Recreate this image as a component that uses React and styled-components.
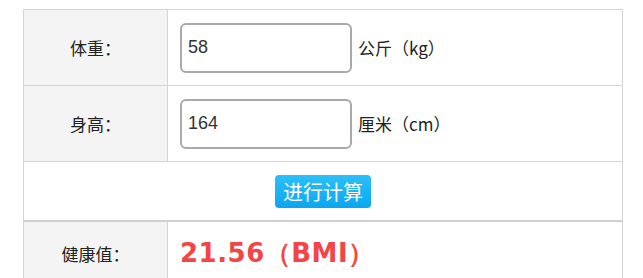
import React from "react";
import styled, { createGlobalStyle } from "styled-components";

const GlobalStyle = createGlobalStyle`
  body {
    margin: 0;
    background: #fff;
    font-family: "Liberation Sans", "Noto Sans CJK SC", Arial, sans-serif;
  }
`;

const Wrapper = styled.div`
  padding: 9px 0 0 23px;
`;

const Table = styled.table`
  width: 600px;
  border-collapse: collapse;
  border: 1px solid #d4d4d4;
`;

const Row = styled.tr`
  height: ${(p) => p.$h}px;
  border-bottom: ${(p) => (p.$thick ? "2px solid #cdd3cc" : "1px solid #d4d4d4")};
`;

const LabelCell = styled.td`
  width: 143px;
  background: #f4f4f4;
  border-right: 1px solid #d4d4d4;
  text-align: center;
  font-size: 17px;
  font-family: "Noto Sans CJK SC", sans-serif;
  color: #222;
  padding: 0;
`;

const ValueCell = styled.td`
  padding: 0 0 0 12px;
  font-size: 17px;
  color: #222;
`;

const CenterCell = styled.td`
  text-align: center;
  padding: 0;
`;

const Field = styled.div`
  display: flex;
  align-items: center;
  gap: 6px;
`;

const Input = styled.input`
  box-sizing: border-box;
  width: 172px;
  height: 50px;
  border: 2px solid #a9a9a9;
  border-radius: 6px;
  padding: 0 6px;
  font-family: "Liberation Sans", Arial, sans-serif;
  font-size: 18px;
  color: #333;
  outline: none;
`;

const Unit = styled.span`
  font-size: 17px;
  font-family: "Noto Sans CJK SC", "Liberation Sans", sans-serif;
`;

const CalcButton = styled.button`
  height: 33px;
  padding: 0 8px;
  margin-top: 1px;
  border: none;
  border-radius: 4px;
  background: linear-gradient(#2cc0f8, #0aa6ef);
  color: #fff;
  font-size: 20px;
  font-family: "Noto Sans CJK SC", sans-serif;
  line-height: 33px;
  cursor: pointer;
`;

const Result = styled.span`
  font-family: "DejaVu Sans", Verdana, sans-serif;
  font-weight: bold;
  font-size: 26px;
  color: #f34545;
  letter-spacing: 0.5px;
`;

export default function App() {
  return (
    <Wrapper>
      <GlobalStyle />
      <Table>
        <tbody>
          <Row $h={76}>
            <LabelCell>体重：</LabelCell>
            <ValueCell>
              <Field>
                <Input defaultValue="58" />
                <Unit>公斤（kg）</Unit>
              </Field>
            </ValueCell>
          </Row>
          <Row $h={76}>
            <LabelCell>身高：</LabelCell>
            <ValueCell>
              <Field>
                <Input defaultValue="164" />
                <Unit>厘米（cm）</Unit>
              </Field>
            </ValueCell>
          </Row>
          <Row $h={59} $thick>
            <CenterCell colSpan={2}>
              <CalcButton>进行计算</CalcButton>
            </CenterCell>
          </Row>
          <Row $h={66}>
            <LabelCell>健康值：</LabelCell>
            <ValueCell>
              <Result>21.56（BMI）</Result>
            </ValueCell>
          </Row>
        </tbody>
      </Table>
    </Wrapper>
  );
}
